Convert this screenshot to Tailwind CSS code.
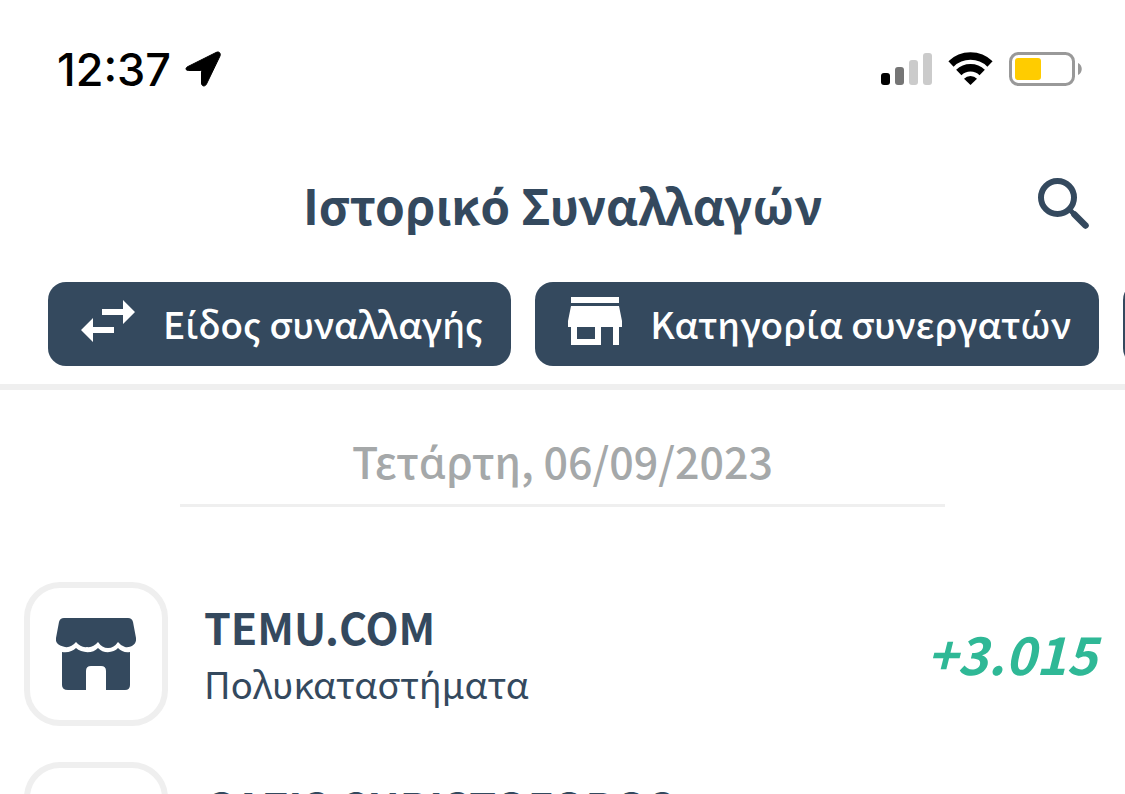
<!DOCTYPE html>
<html lang="el">
<head>
    <meta charset="UTF-8">
    <meta name="viewport" content="width=device-width, initial-scale=1.0">
    <title>Ιστορικό Συναλλαγών</title>
    <script src="https://cdn.jsdelivr.net/npm/@tailwindcss/browser@4"></script>
    <style>
        /* The CJK family has no accented Greek vowels */
        .tonos {
            font-family: 'Noto Sans', sans-serif;
        }
    </style>
</head>
<body class="bg-white h-screen overflow-hidden font-['Noto_Sans_CJK_SC','Noto_Sans',sans-serif] text-[#34495e]">

    <!-- Status bar -->
    <div class="flex items-center justify-between h-[138px] pl-[57px] pr-[42px] text-black">
        <div class="flex items-center gap-3.5">
            <span class="font-['Inter',sans-serif] font-medium text-[45px] leading-none">12:37</span>
            <svg class="w-9 h-9" viewBox="0 0 36 36" fill="currentColor" stroke="currentColor" stroke-linejoin="round">
                <path d="M31 1.500 3 15.500C0 17 .5 19.500 3.500 19.500H15.500C16.200 19.500 16.500 19.800 16.500 20.500V32C16.500 35.500 20 36 21.500 33L35 5C36 2 34 0 31 1.500Z" />
            </svg>
        </div>
        <div class="flex items-center gap-4">
            <svg class="w-[52px] h-8" viewBox="0 0 52 32">
                <rect x="1" y="20" width="9" height="12" rx="3" fill="#000" />
                <rect x="15" y="14" width="9" height="18" rx="3" fill="#757575" />
                <rect x="29" y="7" width="9" height="25" rx="3" fill="#cbcbcb" />
                <rect x="43" y="0" width="9" height="32" rx="3" fill="#cbcbcb" />
            </svg>
            <svg class="w-[45px] h-[34px]" viewBox="0 0 45 34" fill="none" stroke="currentColor" stroke-width="7.500">
                <path d="M3 12a28 28 0 0 1 39 0" />
                <path d="M10.800 20.500a16.500 16.500 0 0 1 23.400 0" />
                <path d="M22.500 33 16 26.800a9 9 0 0 1 13 0Z" fill="currentColor" stroke="none" />
            </svg>
            <svg class="w-[74px] h-[34px]" viewBox="0 0 74 34">
                <rect x="1.500" y="1.500" width="63" height="31" rx="8" fill="none" stroke="#999" stroke-width="3" />
                <rect x="6" y="6" width="26" height="22" rx="3" fill="#fc0" />
                <path d="M69 11c5 2 5 10 0 12Z" fill="#999" />
            </svg>
        </div>
    </div>

    <header class="grid grid-cols-[1fr_auto_1fr] items-center h-[144px] pb-2.5 px-9">
        <h1 class="col-start-2 font-bold text-[48px] leading-none">Ιστορικ<span class="tonos">ό</span> Συναλλαγ<span class="tonos">ώ</span>ν</h1>
        <button type="button" aria-label="Αναζήτηση" class="justify-self-end">
            <svg class="w-[52px] h-[54px]" viewBox="0 0 52 54" fill="none" stroke="currentColor">
                <circle cx="20.500" cy="19.500" r="16.500" stroke-width="6" />
                <path d="M31.500 30.500 38 37" stroke-width="5" />
                <path d="M37.500 36.500 48.500 47.500" stroke-width="6.500" stroke-linecap="round" />
            </svg>
        </button>
    </header>

    <!-- Filters -->
    <nav class="flex gap-6 h-[108px] pl-12 items-start overflow-hidden border-b-6 border-[#efefef]">
        <button type="button" class="flex shrink-0 items-center gap-7 h-[84px] pl-[33px] pr-7 rounded-[18px] bg-[#34495e] text-white font-medium text-[37px] leading-none">
            <svg class="w-[54px] h-[42px] mb-1.5" viewBox="0 0 54 42" fill="currentColor">
                <path d="M21 9H42V0L54 12 42 24V15H21ZM33 27H12V18L0 30 12 42V33H33Z" />
            </svg>
            <span>Ε<span class="tonos">ί</span>δος συναλλαγ<span class="tonos">ή</span>ς</span>
        </button>
        <button type="button" class="flex shrink-0 items-center gap-7 h-[84px] pl-[33px] pr-7 rounded-[18px] bg-[#34495e] text-white font-medium text-[37px] leading-none">
            <svg class="w-[54px] h-12 mb-1.5" viewBox="0 0 54 48" fill="currentColor">
                <path fill-rule="evenodd" d="M3 0H51V6H3ZM3 9H51L54 24V30H51V48H45V30H33V48H3V30H0V24ZM9 30V42H27V30Z" />
            </svg>
            <span>Κατηγορ<span class="tonos">ί</span>α συνεργατ<span class="tonos">ώ</span>ν</span>
        </button>
        <button type="button" class="shrink-0 w-[464px] h-[84px] rounded-[18px] bg-[#34495e]" aria-label="Ημερομηνία"></button>
    </nav>

    <main>
        <h2 class="mx-[180px] h-[117px] pt-[46px] border-b-3 border-[#efefef] text-center font-medium text-[43px] leading-[48px] text-[#a5a8a9]">Τετ<span class="tonos">ά</span>ρτη, 06/09/2023</h2>

        <ul class="flex flex-col gap-9 pt-[75px] px-6">
            <li class="flex items-center h-36">
                <div class="flex shrink-0 items-center justify-center w-36 h-36 border-6 border-[#efefef] rounded-[36px]">
                    <svg class="w-20 h-[73px]" viewBox="0 0 80 73" fill="currentColor">
                        <path d="M8 0H72Q76 0 77 4L80 20C81 27 74 30 69 29Q65 28 62 24Q58 30 52 30Q46 30 42 24Q37 30 31 29Q25 30 20 24Q15 30 9 29C3 28-1 25 0 20L3 4Q4 0 8 0Z" />
                        <path d="M6 34C12 35 17 33 20 30C25 35 37 36 42 30C47 36 58 35 62 30C65 33 69 35 74 34V67Q74 72 69 72H50V53Q50 48 45 48H35Q30 48 30 53V72H12Q6 72 6 67Z" />
                    </svg>
                </div>
                <div class="flex-1 pl-9 pt-0.5">
                    <h3 class="font-bold text-[43px] leading-[58px]">TEMU.COM</h3>
                    <p class="text-[37px] leading-[56px]">Πολυκαταστ<span class="tonos">ή</span>ματα</p>
                </div>
                <span class="pr-1 pb-0.5 font-bold italic text-[52px] leading-none text-[#2fb896]">+3.015</span>
            </li>
            <li class="flex items-center h-36">
                <div class="shrink-0 w-36 h-36 border-6 border-[#efefef] rounded-[36px]"></div>
                <div class="flex-1 pl-9 pt-0.5">
                    <h3 class="font-bold text-[43px] leading-[58px]">GAZIS CHRISTOFOROS</h3>
                    <p class="text-[37px] leading-[56px]">Πολυκαταστ<span class="tonos">ή</span>ματα</p>
                </div>
            </li>
        </ul>
    </main>

</body>
</html>
